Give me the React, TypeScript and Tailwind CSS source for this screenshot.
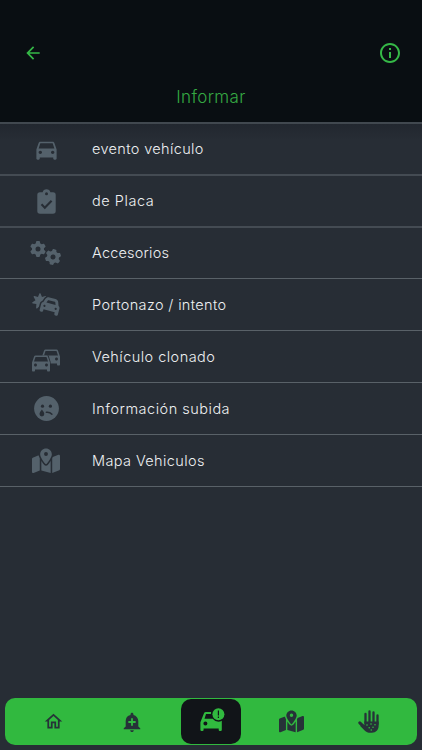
import type { ReactNode } from "react";
import clsx from "clsx";
import { MdArrowBack, MdInfoOutline, MdDirectionsCar, MdOutlineHome, MdAddAlert } from "react-icons/md";
import { FaGear, FaCarBurst, FaMapLocationDot } from "react-icons/fa6";

const CAR_PATH =
  "M18.92 6.01C18.72 5.42 18.16 5 17.5 5h-11c-.66 0-1.21.42-1.42 1.01L3 12v8c0 .55.45 1 1 1h1c.55 0 1-.45 1-1v-1h12v1c0 .55.45 1 1 1h1c.55 0 1-.45 1-1v-8l-2.08-5.99zM6.5 16c-.83 0-1.5-.67-1.5-1.5S5.67 13 6.5 13s1.5.67 1.5 1.5S7.33 16 6.5 16zm11 0c-.83 0-1.5-.67-1.5-1.5s.67-1.5 1.5-1.5 1.5.67 1.5 1.5-.67 1.5-1.5 1.5zM5 11l1.5-4.5h11L19 11H5z";

function Clipboard() {
  return (
    <svg width="19" height="25" viewBox="0 0 19 25" fill="currentColor">
      <path d="M3 3.2h2.6C6 1.4 7.5.2 9.5.2s3.5 1.2 3.9 3H16a2.7 2.7 0 0 1 2.7 2.7v16.2a2.7 2.7 0 0 1-2.7 2.7H3A2.7 2.7 0 0 1 .3 22.1V5.9A2.7 2.7 0 0 1 3 3.2Z" />
      <circle cx="9.5" cy="4.7" r="1.5" fill="#272d35" />
      <path d="m4.5 15.3 3.300 3.400 6.800-7" fill="none" stroke="#272d35" strokeWidth="2.1" />
    </svg>
  );
}

function Gears() {
  return (
    <div className="relative h-6 w-8">
      <FaGear size={16} className="absolute left-0 top-0" />
      <FaGear size={16} className="absolute left-[14.5px] top-2 rotate-[12deg]" />
    </div>
  );
}

function TwoCars() {
  return (
    <svg width="28" height="23" viewBox="0 0 28 23" fill="currentColor">
      <path d={CAR_PATH} transform="translate(7 -4.6)" />
      <path d="M2.4 6.5h14.2L18.6 13v10H0V13Z" fill="#272d35" />
      <path d={CAR_PATH} transform="translate(-3 1.4)" />
    </svg>
  );
}

function SadFace() {
  return (
    <svg width="25" height="25" viewBox="0 0 25 25" fill="currentColor">
      <circle cx="12.5" cy="12.5" r="12.4" />
      <g fill="#272d35">
        <circle cx="8.5" cy="10.2" r="1.6" />
        <circle cx="16.4" cy="10.2" r="1.6" />
        <path d="M7.900 13.600c1.200 1.700 2.400 3.100 2.400 4.400a2.400 2.400 0 0 1-4.800 0c0-1.300 1.200-2.700 2.400-4.400Z" />
      </g>
      <path d="M12.400 16.300c2.400-.3 4.100.4 5.500 2" fill="none" stroke="#272d35" strokeWidth="1.5" strokeLinecap="round" />
    </svg>
  );
}

function CarAlert() {
  return (
    <svg width="25" height="24" viewBox="0 0 25 24" fill="#31b93f">
      <path
        fillRule="evenodd"
        d="M4 5.200Q4.500 4 5.800 4h5.400q-.4 1.100-.2 2.100H6L4.500 10.700h8.200q2.300 3 5.700 3.100 1.900 0 3.400-1V21.700q0 1.200-1.100 1.200h-.9q-1.100 0-1.100-1.200v-1.100H3.600v1.100q0 1.200-1.100 1.200h-1Q.4 22.900.4 21.700V14.200L4 5.200ZM5.400 13.500a2 2 0 1 0 0 4 2 2 0 0 0 0-4Z"
      />
      <circle cx="18.4" cy="6.2" r="6" />
      <path d="M17.800 2.400h1.200v5.100h-1.200zM17.800 8.600h1.200V10h-1.200z" fill="#111418" />
    </svg>
  );
}

function Hand() {
  return (
    <svg width="22" height="23" viewBox="0 0 22 23" fill="currentColor">
      <g fill="none" stroke="currentColor" strokeWidth="2.3" strokeLinecap="round">
        <path d="M7.500 13V3.900M11.500 13V1.500M15.500 13V2.500M19.500 14V5.400" />
        <path d="m7 17.800-5.200-5" strokeWidth="3" />
      </g>
      <path d="M6.350 11.500h14.300v4.300c0 4-2.700 6.900-6.700 6.900h-1.500c-2.500 0-4.200-.7-5.800-2.300l-4.400-4.500 2-2 2.100 1.300Z" />
      <g fill="#31b93f">
        <circle cx="9" cy="15" r=".8" />
        <circle cx="13" cy="14" r=".8" />
        <circle cx="17" cy="14.7" r=".8" />
        <circle cx="11.2" cy="17.7" r=".8" />
        <circle cx="15" cy="17.2" r=".8" />
        <circle cx="13.3" cy="20" r=".8" />
      </g>
    </svg>
  );
}

type Item = { label: string; icon: ReactNode; tracking: string };

const items: Item[] = [
  { label: "evento vehículo", icon: <MdDirectionsCar size={27} />, tracking: "tracking-[0.35px]" },
  { label: "de Placa", icon: <Clipboard />, tracking: "tracking-[0.55px]" },
  { label: "Accesorios", icon: <Gears />, tracking: "tracking-[0.19px]" },
  { label: "Portonazo / intento", icon: <FaCarBurst size={29} />, tracking: "tracking-[0.36px]" },
  { label: "Vehículo clonado", icon: <div className="pt-2"><TwoCars /></div>, tracking: "tracking-[0.46px]" },
  { label: "Información subida", icon: <SadFace />, tracking: "tracking-[0.5px]" },
  { label: "Mapa Vehiculos", icon: <FaMapLocationDot size={28} />, tracking: "tracking-[0.39px]" },
];

export default function App() {
  return (
    <div className="flex h-[750px] w-[422px] flex-col overflow-hidden bg-[#272d35] font-['Inter',sans-serif]">
      <header className="h-[122px] shrink-0 bg-[#090e12]">
        <div className="flex items-center justify-between pl-[23px] pr-5 pt-[41px] text-[#35b847]">
          <MdArrowBack size={20} />
          <MdInfoOutline size={24} />
        </div>
        <h1 className="mt-5 text-center text-[17px] font-light leading-6 tracking-[0.35px] text-[#35a843]">Informar</h1>
      </header>

      <ul className="border-t-2 border-[#41484f] bg-linear-to-b from-[#22272f] to-[#272d35] to-[16px]">
        {items.map((item, i) => (
          <li
            key={item.label}
            className={clsx(
              "flex items-center",
              i < 2 ? "border-b-2 border-[#444b53]" : "border-b border-[#596168]",
              i === 2 ? "h-[51px]" : "h-[52px]",
            )}
          >
            <div className="flex w-[92px] justify-center text-[#54616b]">{item.icon}</div>
            <span className={clsx("text-[14.5px] font-light leading-5 text-[#eef0f2]", item.tracking)}>
              {item.label}
            </span>
          </li>
        ))}
      </ul>

      <nav className="mx-[5px] mb-[5px] mt-auto flex h-[47px] items-center rounded-[10px] bg-[#31b93f] text-[#263238]">
        <div className="flex w-24 justify-center pb-px"><MdOutlineHome size={21} /></div>
        <div className="flex w-[62px] justify-center"><MdAddAlert size={22} /></div>
        <div className="ml-[18px] flex h-[45px] w-[60px] items-center justify-center rounded-[10px] bg-[#111418] pb-1 pl-0.5">
          <CarAlert />
        </div>
        <div className="flex w-[100px] justify-center pb-px"><FaMapLocationDot size={25} /></div>
        <div className="flex w-14 justify-center pb-px"><Hand /></div>
      </nav>
    </div>
  );
}
